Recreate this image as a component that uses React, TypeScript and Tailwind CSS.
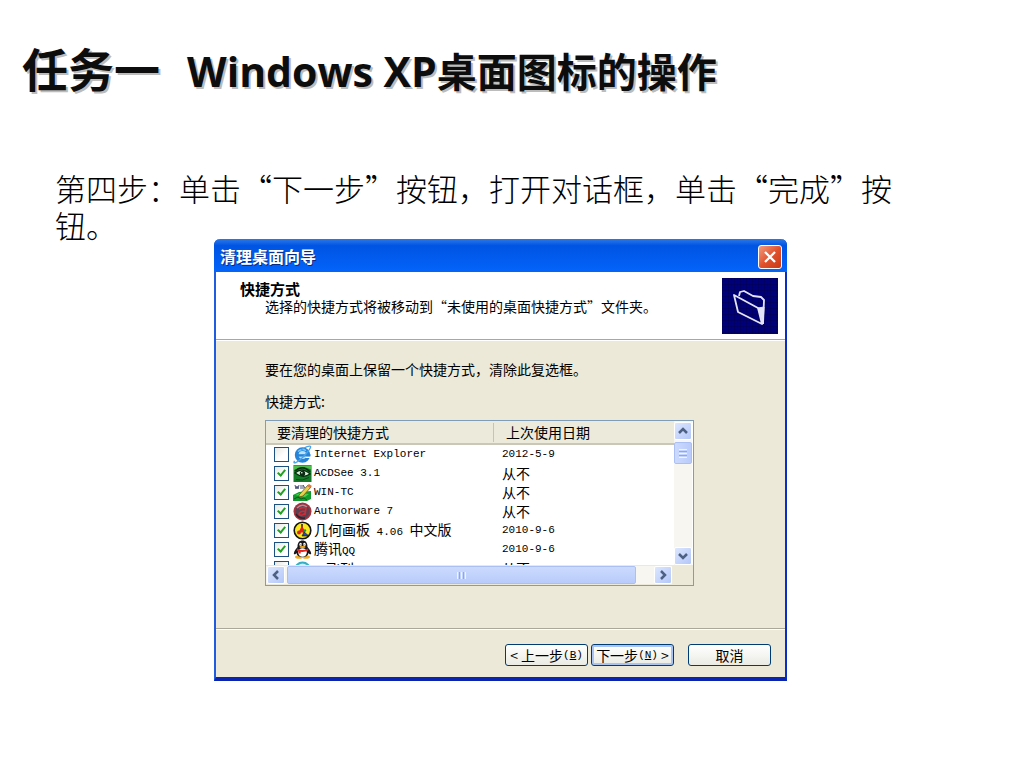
import type { ReactNode } from 'react';

const cjk = 'font-["Noto_Sans_CJK_SC",sans-serif]';
const mono = 'font-["Liberation_Mono","Noto_Sans_CJK_SC",monospace] text-[11px]';

function IeIcon() {
  return (
    <svg viewBox="0 0 19 19" className="size-[19px] shrink-0" aria-hidden="true">
      <circle cx="9.5" cy="10" r="5.8" fill="#bfe2fa" stroke="#2583d8" strokeWidth="3.8" />
      <path d="M5 10.4h12.5" stroke="#2583d8" strokeWidth="2.4" />
      <path d="M12.5 12.3h5.5" stroke="#fff" strokeWidth="1.4" />
      <path d="M5 6.5q4-3.5 8-.8" stroke="#79c5f7" strokeWidth="1.5" fill="none" />
      <path d="M1.6 15.8C-.6 19.6 4 17.8 8.5 13.6S18 3 17.6 1.6 12 1.8 8 5" fill="none" stroke="#4aa3e8" strokeWidth="1.4" />
    </svg>
  );
}

function AcdIcon() {
  return (
    <svg viewBox="0 0 19 19" className="size-[19px] shrink-0" aria-hidden="true">
      <rect x="0.5" y="1" width="18" height="17" fill="#137a28" />
      <path d="M1 1.5h17v4Q9 1 1 6z" fill="#4cbf4b" />
      <path d="M2 9q7-6 15 1-7 5-15-1z" fill="#dff2dc" stroke="#062b0e" strokeWidth="1.2" />
      <circle cx="9.5" cy="9.5" r="2.7" fill="#0b2a12" />
      <circle cx="8.8" cy="8.7" r="0.8" fill="#fff" />
      <path d="M2 7q8-7 15 1" fill="none" stroke="#062b0e" strokeWidth="1.5" />
      <path d="M3 15.5q6 2 13-2" stroke="#0a4a17" fill="none" />
    </svg>
  );
}

function WinTcIcon() {
  return (
    <svg viewBox="0 0 19 19" className="size-[19px] shrink-0" aria-hidden="true">
      <path d="M0 12l6-3 12-1v8l-4 2H0z" fill="#129b2c" />
      <path d="M2 12l5-2 9 1-4 3z" fill="#3fd34c" />
      <path d="M6 12l9-10 3 2-8 9-4 1z" fill="#e9cf50" stroke="#675414" strokeWidth="0.8" />
      <path d="M14 3l2-2 3 2-2 2z" fill="#dd7a3b" />
      <path d="M2 2l1 4 1-3 1 3 1-4M8 2v4M10 6V2l2 3" fill="none" stroke="#4b5279" strokeWidth="1" />
      <path d="M1 16l4-2 3 2 3-1 3 2" fill="none" stroke="#075d18" />
    </svg>
  );
}

function AuthorwareIcon() {
  return (
    <svg viewBox="0 0 19 19" className="size-[19px] shrink-0" aria-hidden="true">
      <circle cx="9.5" cy="9.5" r="9" fill="#a6303c" />
      <circle cx="9.5" cy="9.5" r="7" fill="#5c4050" />
      <path d="M4 6q5-5 10-1" stroke="#b58b93" strokeWidth="1.5" fill="none" />
      <path d="M6 7q4-2 7-1l-1 7M12 9q-5 0-6 3 2 3 6-1" fill="none" stroke="#d02b36" strokeWidth="1.6" />
      <path d="M3 12q3 5 9 4" stroke="#2e2430" strokeWidth="1.5" fill="none" />
    </svg>
  );
}

function SketchpadIcon() {
  return (
    <svg viewBox="0 0 19 19" className="size-[19px] shrink-0" aria-hidden="true">
      <circle cx="9.5" cy="9.5" r="8.3" fill="#f9ea20" stroke="#151515" strokeWidth="1.6" />
      <path d="M9 3v4" stroke="#111" strokeWidth="1.4" />
      <path d="M9 4.5l3.5 7H5.5z" fill="#e02416" />
      <circle cx="6" cy="11.5" r="2" fill="#e02416" />
      <path d="M11 11l5 4H9z" fill="#1c4bbd" stroke="#111" strokeWidth="0.6" />
      <circle cx="12" cy="9.5" r="1.2" fill="#159939" />
    </svg>
  );
}

function QqIcon() {
  return (
    <svg viewBox="0 0 19 19" className="size-[19px] shrink-0" aria-hidden="true">
      <ellipse cx="6" cy="17" rx="4" ry="1.8" fill="#f3ae22" />
      <ellipse cx="13" cy="17" rx="4" ry="1.8" fill="#f3ae22" />
      <path
        d="M4.5 7C4.5 2.500 6.500 .5 9.500 .5s5 2 5 6.500c1.500 2 3.500 4 3.700 6.500-.4 1.500-1.800 .8-2.700-.5-.5 3-3 4-6 4s-5.500-1-6-4c-.9 1.300-2.300 2-2.700 .5C1 11 3 9 4.500 7z"
        fill="#17171b"
      />
      <ellipse cx="9.5" cy="12.5" rx="4.3" ry="4.2" fill="#fff" />
      <ellipse cx="7.6" cy="4.5" rx="1.3" ry="1.7" fill="#fff" />
      <ellipse cx="11.4" cy="4.5" rx="1.3" ry="1.7" fill="#fff" />
      <circle cx="8" cy="4.8" r="0.6" fill="#111" />
      <circle cx="11" cy="4.8" r="0.6" fill="#111" />
      <ellipse cx="9.5" cy="7" rx="3.2" ry="1" fill="#f5a81c" />
      <path d="M4 8.5q5.500 3 11 0l.3 2q-5.500 2.800-11.500 .2z" fill="#e2241d" />
      <path d="M5.500 10.500h2.200v3H5.500z" fill="#e2241d" />
    </svg>
  );
}

function GlobeIcon() {
  return (
    <svg viewBox="0 0 19 19" className="size-[19px] shrink-0" aria-hidden="true">
      <circle cx="9.5" cy="11" r="7.5" fill="#c9f0f5" stroke="#35afc4" strokeWidth="2" />
    </svg>
  );
}

type Row = { name: string; label: ReactNode; date: string; checked: boolean; icon: ReactNode };

const latin = `${mono} block leading-[19px]`;

const rows: Row[] = [
  { name: 'ie', label: <span className={latin}>Internet Explorer</span>, date: '2012-5-9', checked: false, icon: <IeIcon /> },
  { name: 'acdsee', label: <span className={latin}>ACDSee 3.1</span>, date: '从不', checked: true, icon: <AcdIcon /> },
  { name: 'wintc', label: <span className={latin}>WIN-TC</span>, date: '从不', checked: true, icon: <WinTcIcon /> },
  { name: 'authorware', label: <span className={latin}>Authorware 7</span>, date: '从不', checked: true, icon: <AuthorwareIcon /> },
  {
    name: 'sketchpad',
    label: <>几何画板<span className={`${mono} whitespace-pre`}> 4.06 </span>中文版</>,
    date: '2010-9-6',
    checked: true,
    icon: <SketchpadIcon />,
  },
  { name: 'qq', label: <>腾讯<span className={mono}>QQ</span></>, date: '2010-9-6', checked: true, icon: <QqIcon /> },
  { name: 'more', label: <span className="pl-3">飞刊</span>, date: '从不', checked: false, icon: <GlobeIcon /> },
];

const checkMark =
  "checked:after:absolute checked:after:left-1 checked:after:top-px checked:after:h-2 checked:after:w-[5px] checked:after:rotate-40 checked:after:border-r-2 checked:after:border-b-2 checked:after:border-[#21a121] checked:after:content-['']";

function ShortcutTable() {
  return (
    <table className="w-full table-fixed border-collapse text-left text-sm leading-[19px]">
      <thead>
        <tr className="h-[23px] border-b-2 border-[#cbc7b8] bg-[#ebeadb]">
          <th className="w-[228px] p-0 pl-[11px] font-normal">
            <div className="border-r border-[#c7c5b2]">要清理的快捷方式</div>
          </th>
          <th className="p-0 pl-3 font-normal">上次使用日期</th>
        </tr>
      </thead>
      <tbody>
        {rows.map((row) => (
          <tr key={row.name} className="h-[19px]">
            <td className="p-0 pl-2">
              <div className="flex h-[19px] items-center">
                <input
                  id={row.name}
                  type="checkbox"
                  defaultChecked={row.checked}
                  className={`relative mr-1 size-[15px] shrink-0 appearance-none border border-[#1c5180] bg-linear-to-br from-[#e8e8e6] to-white to-60% ${checkMark}`}
                />
                {row.icon}
                <label htmlFor={row.name} className="ml-0.5 whitespace-nowrap">{row.label}</label>
              </div>
            </td>
            <td className="p-0 pl-2">
              <div className="h-[19px]">
                {row.date === '从不' ? row.date : <span className={latin}>{row.date}</span>}
              </div>
            </td>
          </tr>
        ))}
      </tbody>
    </table>
  );
}

function Arrow({ d, label }: { d: string; label: string }) {
  return (
    <button
      type="button"
      aria-label={label}
      className="flex size-[18px] shrink-0 items-center justify-center rounded-xs border border-white bg-linear-to-br from-[#dce6fe] to-[#b3c7f8]"
    >
      <svg viewBox="0 0 12 12" className="size-3" aria-hidden="true">
        <path d={d} fill="none" stroke="#4d6185" strokeWidth="2.5" />
      </svg>
    </button>
  );
}

const dialogButton =
  'flex h-[22px] w-[83px] items-center justify-center whitespace-pre rounded-[3px] border border-[#003c74] bg-linear-to-b from-white to-[#ebebe4] text-sm leading-5';

export default function App() {
  return (
    <main className={`min-h-screen overflow-hidden bg-white text-black ${cjk}`}>
      <h1 className="flex items-baseline gap-[27px] pt-[35px] pl-[22px] font-bold whitespace-nowrap text-[#0d0d0d] text-shadow-[2px_2px_0_#bcbcbc]">
        <span className="text-[46px] leading-16">任务一</span>
        <span className="text-[40px] leading-16">
          <span className='font-["Open_Sans",sans-serif] text-[41px]'>Windows XP</span>
          桌面图标的操作
        </span>
      </h1>
      <p className="mt-[66px] ml-[55px] max-w-[850px] text-[31px] leading-[37px] font-light">
        第四步：单击“下一步”按钮，打开对话框，单击“完成”按钮。
      </p>

      <section
        aria-label="清理桌面向导"
        className="relative -mt-1 ml-[214px] max-w-[573px] rounded-t-md border-x-2 border-b-4 border-r-[#0a2fc4] border-b-[#0a24b0] border-l-[#1f5ce0] bg-[#ece9d8] text-sm leading-[18px]"
      >
        <header className="-mx-0.5 flex h-[33px] items-center justify-between rounded-t-md bg-linear-to-b from-[#2a78e8] via-[#0054e3] via-20% to-[#0464fb] pr-[5px] pl-1.5 text-white">
          <h2 className="text-base leading-5 font-bold text-shadow-[1px_1px_0_#0a2a80]">清理桌面向导</h2>
          <button
            type="button"
            aria-label="关闭"
            className="mt-0.5 flex size-6 items-center justify-center rounded-[3px] border border-white bg-linear-to-br from-[#f09a7c] via-[#e1522c] to-[#c93a12]"
          >
            <svg viewBox="0 0 16 16" className="size-4" aria-hidden="true">
              <path d="M3 3l10 10M13 3L3 13" stroke="#fff" strokeWidth="2.3" />
            </svg>
          </button>
        </header>

        <div className="flex justify-between border-b border-[#aca899] bg-white pt-1.5 pr-[7px] pb-[5px] pl-6">
          <div className="pt-0.5">
            <h3 className="text-[15px] leading-[18px] font-bold">快捷方式</h3>
            <p className="pl-[25px] leading-4">选择的快捷方式将被移动到“未使用的桌面快捷方式”文件夹。</p>
          </div>
          <svg viewBox="0 0 56 56" className="size-14 shrink-0" aria-hidden="true">
            <defs>
              <pattern id="grid" width="3" height="3" patternUnits="userSpaceOnUse">
                <rect width="3" height="3" fill="#00007a" />
                <path d="M0 0h3M0 0v3" stroke="#000050" />
              </pattern>
            </defs>
            <rect width="56" height="56" fill="url(#grid)" />
            <g fill="none" stroke="#e4e4f8" strokeWidth="1.8" strokeLinejoin="round">
              <path d="M12 17l4 17 24 12-4-16z" />
              <path d="M17 18l1-4 4-1 9 5 8 1 3 3-1 24" />
              <path d="M36 30l6-1-1 17z" fill="#e4e4f8" strokeWidth="1" />
            </g>
          </svg>
        </div>

        <div className="border-t border-white pr-[91px] pl-[49px]">
          <p className="pt-[19px]">要在您的桌面上保留一个快捷方式，清除此复选框。</p>
          <p className="pt-3.5">快捷方式:</p>
          <div className="mt-2.5 border border-[#7f9db9] bg-white">
            <div className="flex h-36">
              <div className="min-w-0 flex-1 overflow-hidden">
                <ShortcutTable />
              </div>
              <div className="mr-px flex w-[18px] flex-col bg-[#f7f6f1] pt-px">
                <Arrow label="向上滚动" d="M2 8l4-4 4 4" />
                <div className="mt-0.5 flex h-[22px] flex-col items-center justify-center gap-px rounded-xs border border-[#a9bff5] bg-linear-to-r from-[#cbdafd] to-[#bacbfb]">
                  <i className="h-px w-2 bg-[#eef4fe]" />
                  <i className="h-px w-2 bg-[#8ca8e8]" />
                  <i className="h-px w-2 bg-[#eef4fe]" />
                  <i className="h-px w-2 bg-[#8ca8e8]" />
                  <i className="h-px w-2 bg-[#eef4fe]" />
                </div>
                <div className="mt-auto"><Arrow label="向下滚动" d="M2 4l4 4 4-4" /></div>
              </div>
            </div>
            <div className="flex h-5 items-center bg-[#ece9d8] pr-[21px]">
              <div className="flex flex-1 items-center bg-[#f7f6f1] pl-px">
                <Arrow label="向左滚动" d="M8 2L4 6l4 4" />
                <div className="ml-0.5 flex h-[18px] flex-1 items-center justify-center gap-px rounded-xs border border-[#a9bff5] bg-linear-to-b from-[#cbdafd] to-[#b9cbfb]">
                  <i className="h-[7px] w-px bg-[#eef4fe]" />
                  <i className="h-[7px] w-px bg-[#8ca8e8]" />
                  <i className="h-[7px] w-px bg-[#eef4fe]" />
                  <i className="h-[7px] w-px bg-[#8ca8e8]" />
                  <i className="h-[7px] w-px bg-[#eef4fe]" />
                </div>
                <div className="ml-[18px]"><Arrow label="向右滚动" d="M4 2l4 4-4 4" /></div>
              </div>
            </div>
          </div>
        </div>

        <div className="mt-[42px] h-0.5 border-t border-b border-t-[#aca899] border-b-white" />
        <footer className="flex justify-end pt-3.5 pr-3.5 pb-[11px]">
          <button type="button" className={dialogButton}>&lt; 上一步<span className={mono}>(<u>B</u>)</span></button>
          <button type="button" className={`${dialogButton} ml-[3px] shadow-[inset_0_0_0_2px_#a9c4f2]`}>
            下一步<span className={mono}>(<u>N</u>)</span> &gt;
          </button>
          <button type="button" className={`${dialogButton} ml-3.5`}>取消</button>
        </footer>
      </section>
    </main>
  );
}
